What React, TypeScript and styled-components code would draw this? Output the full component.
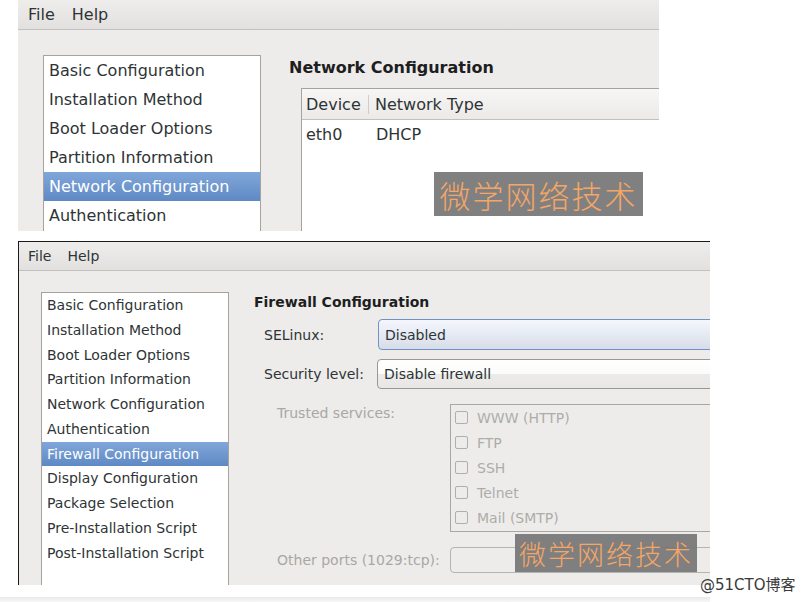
import React from "react";
import styled, { createGlobalStyle } from "styled-components";

const Global = createGlobalStyle`
  html, body { margin: 0; padding: 0; background: #ffffff; }
  body { font-family: "DejaVu Sans", "Noto Sans", sans-serif; color: #2e3436; }
`;

const Page = styled.div`
  position: relative;
  width: 809px;
  height: 602px;
  overflow: hidden;
  background: #ffffff;
  display: flex;
  flex-direction: column;
`;

const Screen = styled.div<{ $w: number; $h: number; $mt: number; $framed?: boolean; $fs: number }>`
  margin-left: 18px;
  margin-top: ${(p) => p.$mt}px;
  width: ${(p) => p.$w}px;
  height: ${(p) => p.$h}px;
  overflow: hidden;
  box-sizing: border-box;
  background: #edeceb;
  font-size: ${(p) => p.$fs}px;
  display: flex;
  flex-direction: column;
  flex-shrink: 0;
  ${(p) => (p.$framed ? "border-top: 1px solid #1a1a1a; border-left: 1px solid #1a1a1a;" : "")}
`;

const MenuBar = styled.div<{ $h: number; $pl: number; $gap: number }>`
  height: ${(p) => p.$h}px;
  flex-shrink: 0;
  display: flex;
  align-items: center;
  gap: ${(p) => p.$gap}px;
  padding-left: ${(p) => p.$pl}px;
  background: linear-gradient(#eeedeb, #e2e1df);
  border-bottom: 1px solid #c3c1bd;
  color: #2e3436;
`;

const Body = styled.div<{ $pt: number; $pl: number; $gap: number }>`
  flex: 1;
  display: flex;
  align-items: flex-start;
  padding-top: ${(p) => p.$pt}px;
  padding-left: ${(p) => p.$pl}px;
  gap: ${(p) => p.$gap}px;
  min-height: 0;
`;

const SideList = styled.div<{ $w: number }>`
  width: ${(p) => p.$w}px;
  flex-shrink: 0;
  align-self: stretch;
  background: #ffffff;
  border: 1px solid #a6a39e;
  border-bottom: none;
  box-sizing: border-box;
  display: flex;
  flex-direction: column;
  height: 400px;
`;

const SideItem = styled.div<{ $h: number; $active?: boolean }>`
  height: ${(p) => p.$h}px;
  line-height: ${(p) => p.$h}px;
  padding-left: 5px;
  white-space: nowrap;
  color: ${(p) => (p.$active ? "#ffffff" : "#2e3436")};
  background: ${(p) => (p.$active ? "linear-gradient(#80a7da, #5f89c4)" : "transparent")};
`;

const Panel = styled.div<{ $pt: number }>`
  flex: 1;
  display: flex;
  flex-direction: column;
  padding-top: ${(p) => p.$pt}px;
  min-width: 0;
`;

const Heading = styled.div<{ $lh: number }>`
  font-weight: bold;
  line-height: ${(p) => p.$lh}px;
  color: #1e1e1e;
  white-space: nowrap;
`;

/* ---- top: network table ---- */
const Table = styled.div`
  margin-top: 10px;
  margin-left: 12px;
  width: 420px;
  height: 200px;
  background: #ffffff;
  border: 1px solid #a6a39e;
  display: flex;
  flex-direction: column;
`;

const THead = styled.div`
  height: 30px;
  display: flex;
  align-items: center;
  background: linear-gradient(#f7f6f5, #ebeae8);
  border-bottom: 1px solid #c2c0bb;
`;

const TRow = styled.div`
  height: 28px;
  display: flex;
  align-items: center;
`;

const Cell = styled.div<{ $w?: number; $sep?: boolean }>`
  ${(p) => (p.$w ? `width: ${p.$w}px;` : "flex: 1;")}
  box-sizing: border-box;
  padding-left: 4px;
  white-space: nowrap;
  ${(p) => (p.$sep ? "border-right: 1px solid #cfcdc9;" : "")}
`;

/* ---- bottom: firewall form ---- */
const FormGrid = styled.div<{ $cols: string; $ml: number; $mt: number; $rg: number }>`
  display: grid;
  grid-template-columns: ${(p) => p.$cols};
  margin-left: ${(p) => p.$ml}px;
  margin-top: ${(p) => p.$mt}px;
  row-gap: ${(p) => p.$rg}px;
  align-items: center;
`;

const Label = styled.div<{ $dim?: boolean; $top?: boolean }>`
  color: ${(p) => (p.$dim ? "#a9a7a3" : "#2e3436")};
  white-space: nowrap;
  ${(p) => (p.$top ? "align-self: start; line-height: 18px; padding-top: 0px;" : "")}
`;

const Combo = styled.div<{ $focus?: boolean; $h: number }>`
  width: 420px;
  height: ${(p) => p.$h}px;
  box-sizing: border-box;
  border-radius: 4px 0 0 4px;
  padding-left: 6px;
  display: flex;
  align-items: center;
  color: #2e3436;
  border: 1px solid ${(p) => (p.$focus ? "#6f93c6" : "#9b9893")};
  background: ${(p) =>
    p.$focus
      ? "linear-gradient(#f4f7fd, #d7dde8)"
      : "linear-gradient(#ffffff 0%, #fbfbfa 50%, #ecebe9 51%, #e8e7e5 100%)"};
`;

const ServiceBox = styled.div`
  width: 400px;
  box-sizing: border-box;
  border: 1px solid #a9a7a3;
  padding: 0 0 1px 4px;
  display: flex;
  flex-direction: column;
`;

const Service = styled.div`
  height: 25px;
  display: flex;
  align-items: center;
  gap: 9px;
  color: #aeaca8;
`;

const Check = styled.span`
  width: 13px;
  height: 13px;
  box-sizing: border-box;
  border: 1px solid #b1afab;
  border-radius: 2px;
  background: #edeceb;
`;

const PortInput = styled.div`
  width: 400px;
  height: 26px;
  box-sizing: border-box;
  border: 1px solid #b6b4af;
  border-radius: 4px;
  background: #edeceb;
`;

/* ---- overlays ---- */
const Stamp = styled.div<{ $x: number; $y: number; $w: number; $h: number; $fs: number }>`
  position: absolute;
  left: ${(p) => p.$x}px;
  top: ${(p) => p.$y}px;
  width: ${(p) => p.$w}px;
  height: ${(p) => p.$h}px;
  background: rgba(118, 118, 118, 0.93);
  color: #f5a666;
  font-family: "Noto Sans CJK SC", sans-serif;
  font-weight: 300;
  font-size: ${(p) => p.$fs}px;
  letter-spacing: 2px;
  display: flex;
  align-items: center;
  justify-content: center;
  white-space: nowrap;
`;

const Credit = styled.div`
  position: absolute;
  left: 700px;
  top: 573px;
  font-family: "DejaVu Sans", "Noto Sans CJK SC", sans-serif;
  font-size: 15px;
  color: #3a3a3a;
  white-space: nowrap;
`;

const BottomRule = styled.div`
  position: absolute;
  left: 0;
  top: 597px;
  width: 710px;
  height: 5px;
  background: linear-gradient(#e9e9e9, #f7f7f7);
`;

const navTop = [
  "Basic Configuration",
  "Installation Method",
  "Boot Loader Options",
  "Partition Information",
  "Network Configuration",
  "Authentication",
];

const navBottom = [
  "Basic Configuration",
  "Installation Method",
  "Boot Loader Options",
  "Partition Information",
  "Network Configuration",
  "Authentication",
  "Firewall Configuration",
  "Display Configuration",
  "Package Selection",
  "Pre-Installation Script",
  "Post-Installation Script",
];

const services = ["WWW (HTTP)", "FTP", "SSH", "Telnet", "Mail (SMTP)"];

export default function App() {
  return (
    <>
      <Global />
      <Page>
        <Screen $w={641} $h={231} $mt={0} $fs={16}>
          <MenuBar $h={29} $pl={10} $gap={17}>
            <span>File</span>
            <span>Help</span>
          </MenuBar>
          <Body $pt={25} $pl={25} $gap={28}>
            <SideList $w={218}>
              {navTop.map((n) => (
                <SideItem key={n} $h={29} $active={n === "Network Configuration"}>
                  {n}
                </SideItem>
              ))}
            </SideList>
            <Panel $pt={3}>
              <Heading $lh={20}>Network Configuration</Heading>
              <Table>
                <THead>
                  <Cell $w={67} $sep>
                    Device
                  </Cell>
                  <Cell style={{ paddingLeft: 6 }}>Network Type</Cell>
                </THead>
                <TRow>
                  <Cell $w={70}>eth0</Cell>
                  <Cell>DHCP</Cell>
                </TRow>
              </Table>
            </Panel>
          </Body>
        </Screen>

        <Screen $w={692} $h={344} $mt={10} $fs={14} $framed>
          <MenuBar $h={28} $pl={9} $gap={16}>
            <span>File</span>
            <span>Help</span>
          </MenuBar>
          <Body $pt={21} $pl={22} $gap={25}>
            <SideList $w={188}>
              {navBottom.map((n) => (
                <SideItem key={n} $h={24.75} $active={n === "Firewall Configuration"}>
                  {n}
                </SideItem>
              ))}
            </SideList>
            <Panel $pt={1}>
              <Heading $lh={18}>Firewall Configuration</Heading>
              <FormGrid $cols="114px 1fr" $ml={10} $mt={8} $rg={9}>
                <Label>SELinux:</Label>
                <Combo $focus $h={31}>
                  Disabled
                </Combo>
                <Label>Security level:</Label>
                <Combo $h={30} style={{ marginLeft: -1 }}>
                  Disable firewall
                </Combo>
              </FormGrid>
              <FormGrid $cols="173px 1fr" $ml={23} $mt={15} $rg={15}>
                <Label $dim $top>
                  Trusted services:
                </Label>
                <ServiceBox>
                  {services.map((s) => (
                    <Service key={s}>
                      <Check />
                      <span>{s}</span>
                    </Service>
                  ))}
                </ServiceBox>
                <Label $dim>Other ports (1029:tcp):</Label>
                <PortInput />
              </FormGrid>
            </Panel>
          </Body>
        </Screen>

        <Stamp $x={434} $y={172} $w={209} $h={44} $fs={31}>
          微学网络技术
        </Stamp>
        <Stamp $x={515} $y={534} $w={182} $h={38} $fs={27}>
          微学网络技术
        </Stamp>
        <BottomRule />
        <Credit>@51CTO博客</Credit>
      </Page>
    </>
  );
}
